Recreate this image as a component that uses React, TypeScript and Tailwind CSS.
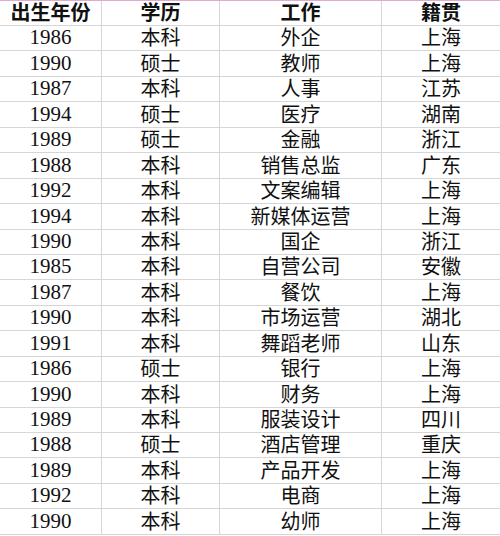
const headers = ["出生年份", "学历", "工作", "籍贯"];

const rows: [string, string, string, string][] = [
  ["1986", "本科", "外企", "上海"],
  ["1990", "硕士", "教师", "上海"],
  ["1987", "本科", "人事", "江苏"],
  ["1994", "硕士", "医疗", "湖南"],
  ["1989", "硕士", "金融", "浙江"],
  ["1988", "本科", "销售总监", "广东"],
  ["1992", "本科", "文案编辑", "上海"],
  ["1994", "本科", "新媒体运营", "上海"],
  ["1990", "本科", "国企", "浙江"],
  ["1985", "本科", "自营公司", "安徽"],
  ["1987", "本科", "餐饮", "上海"],
  ["1990", "本科", "市场运营", "湖北"],
  ["1991", "本科", "舞蹈老师", "山东"],
  ["1986", "硕士", "银行", "上海"],
  ["1990", "本科", "财务", "上海"],
  ["1989", "本科", "服装设计", "四川"],
  ["1988", "硕士", "酒店管理", "重庆"],
  ["1989", "本科", "产品开发", "上海"],
  ["1992", "本科", "电商", "上海"],
  ["1990", "本科", "幼师", "上海"],
];

const grid = "grid grid-cols-[102px_118px_162px_118px]";
const cell = "flex items-end justify-center border-r border-[#d6d6d6] pb-[2px] last:border-r-0";

export default function App() {
  return (
    <div className="h-[536px] w-[500px] overflow-hidden bg-white text-[#111] [font-family:'Liberation_Serif','Noto_Sans_CJK_SC',serif]">
      <div className={`${grid} h-[26px] border-t border-b border-t-[#e2aacd] border-b-[#d6d6d6]`}>
        {headers.map((h) => (
          <div key={h} className={`${cell} text-[20px] leading-[20px] font-bold`}>
            {h}
          </div>
        ))}
      </div>
      {rows.map((r, i) => (
        <div key={i} className={`${grid} h-[25.45px] border-b border-[#d6d6d6]`}>
          <div className={`${cell} text-[21px] leading-[21px]`}>{r[0]}</div>
          <div className={`${cell} text-[20px] leading-[20px]`}>{r[1]}</div>
          <div className={`${cell} text-[20px] leading-[20px]`}>{r[2]}</div>
          <div className={`${cell} text-[20px] leading-[20px]`}>{r[3]}</div>
        </div>
      ))}
    </div>
  );
}
